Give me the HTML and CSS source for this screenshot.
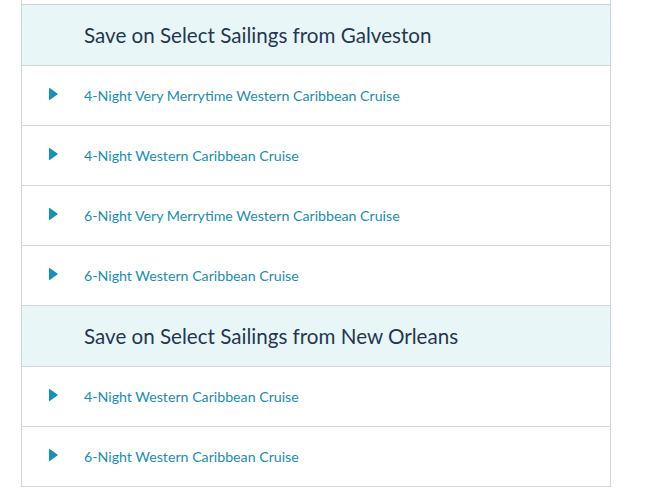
FILE: index.html
```html
<!DOCTYPE html>
<html lang="en">
<head>
    <meta charset="UTF-8">
    <meta name="viewport" content="width=device-width, initial-scale=1.0">
    <title>Cruise Deals</title>
    <link rel="stylesheet" href="styles.css">
</head>
<body>

<div class="deals">
    <div class="group-title">Save on Select Sailings from Galveston</div>
    <a class="deal" href="#"><svg class="arrow" viewBox="0 0 10 14"><path d="M1 1.2 Q1 0.4 1.7 0.9 L9.4 6.4 Q10 7 9.4 7.6 L1.7 13.1 Q1 13.6 1 12.8 Z"/></svg>4-Night Very Merrytime Western Caribbean Cruise</a>
    <a class="deal" href="#"><svg class="arrow" viewBox="0 0 10 14"><path d="M1 1.2 Q1 0.4 1.7 0.9 L9.4 6.4 Q10 7 9.4 7.6 L1.7 13.1 Q1 13.6 1 12.8 Z"/></svg>4-Night Western Caribbean Cruise</a>
    <a class="deal" href="#"><svg class="arrow" viewBox="0 0 10 14"><path d="M1 1.2 Q1 0.4 1.7 0.9 L9.4 6.4 Q10 7 9.4 7.6 L1.7 13.1 Q1 13.6 1 12.8 Z"/></svg>6-Night Very Merrytime Western Caribbean Cruise</a>
    <a class="deal" href="#"><svg class="arrow" viewBox="0 0 10 14"><path d="M1 1.2 Q1 0.4 1.7 0.9 L9.4 6.4 Q10 7 9.4 7.6 L1.7 13.1 Q1 13.6 1 12.8 Z"/></svg>6-Night Western Caribbean Cruise</a>

    <div class="group-title">Save on Select Sailings from New Orleans</div>
    <a class="deal" href="#"><svg class="arrow" viewBox="0 0 10 14"><path d="M1 1.2 Q1 0.4 1.7 0.9 L9.4 6.4 Q10 7 9.4 7.6 L1.7 13.1 Q1 13.6 1 12.8 Z"/></svg>4-Night Western Caribbean Cruise</a>
    <a class="deal" href="#"><svg class="arrow" viewBox="0 0 10 14"><path d="M1 1.2 Q1 0.4 1.7 0.9 L9.4 6.4 Q10 7 9.4 7.6 L1.7 13.1 Q1 13.6 1 12.8 Z"/></svg>6-Night Western Caribbean Cruise</a>
</div>

</body>
</html>
```

FILE: styles.css
```css
body {
    font-family: Lato, "Noto Sans", sans-serif;
    margin: 0;
    padding: 0;
    background-color: #fff;
}
.deals {
    margin-left: 21px;
    width: 588px;
    padding-top: 4px;
    border-left: 1px solid #cfd5dc;
    border-right: 1px solid #cfd5dc;
}
.group-title {
    display: flex;
    align-items: center;
    height: 60px;
    padding-left: 62px;
    border-top: 1px solid #cfd5dc;
    border-bottom: 1px solid #cfd5dc;
    background-color: #e8f6f8;
    color: #253750;
    font-size: 20.6px;
    padding-bottom: 1px;
    box-sizing: border-box;
    height: 62px;
}
.deal + .group-title {
    border-top: none;
    height: 61px;
}
.deal {
    display: flex;
    align-items: center;
    height: 59px;
    padding-left: 26px;
    border-bottom: 1px solid #cfd5dc;
    color: #1b8db3;
    font-size: 14.2px;
    text-decoration: none;
}
.arrow {
    width: 10px;
    height: 14px;
    margin-right: 26px;
    margin-top: -3px;
    fill: #1b8fb5;
}
```
